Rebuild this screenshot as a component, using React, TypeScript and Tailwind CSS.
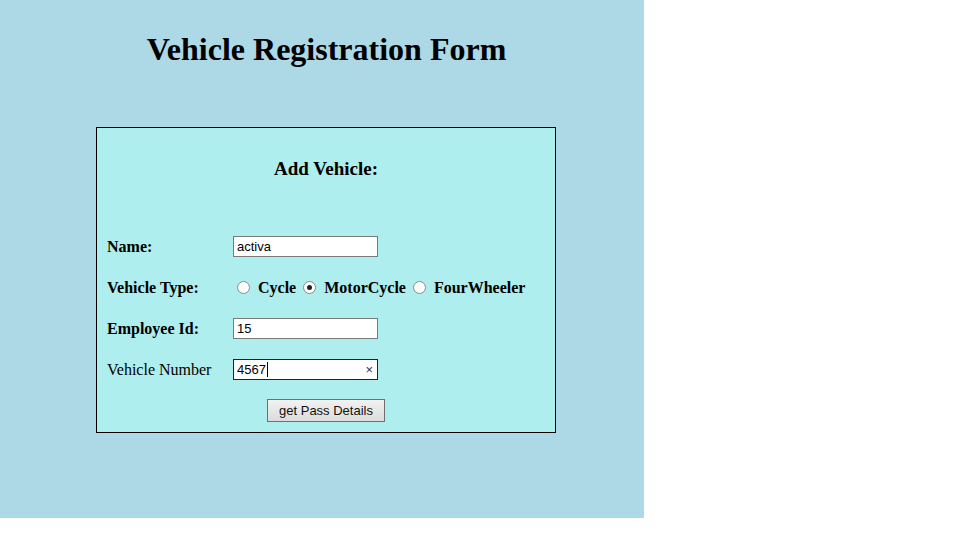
import React from 'react'

// Vehicle registration page: title on a light-blue panel, form in a bordered turquoise box

const serif = "font-['Liberation_Serif','Times_New_Roman',serif]"
const sans = "font-['Liberation_Sans',Arial,sans-serif]"

const Radio: React.FC<{ label: string; checked?: boolean }> = ({ label, checked = false }) => (
  <span className="flex items-center">
    <span className="flex h-[13px] w-[13px] items-center justify-center rounded-full border border-[#8a8a8a] bg-white">
      {checked && <span className="h-[5px] w-[5px] rounded-full bg-[#222]" />}
    </span>
    <span className="ml-[8px] font-bold">{label}</span>
  </span>
)

const TextBox: React.FC<{ value: string; focused?: boolean }> = ({ value, focused = false }) => (
  <div
    className={`flex h-[21px] w-[145px] items-center border bg-white pl-[3px] pr-[4px] text-[13px] text-black ${sans} ${
      focused ? 'border-[#222]' : 'border-[#7a7a7a]'
    }`}
  >
    <span className="leading-none">{value}</span>
    {focused && <span className="ml-[1px] h-[15px] w-px bg-black" />}
    {focused && <span className="ml-auto text-[13px] leading-none text-[#333]">×</span>}
  </div>
)

const Row: React.FC<{ label: string; bold?: boolean; children: React.ReactNode }> = ({ label, bold = true, children }) => (
  <div className="flex h-[41px] items-center">
    <div className={`w-[126px] ${bold ? 'font-bold' : ''}`}>{label}</div>
    {children}
  </div>
)

export default function App() {
  return (
    <div className={`h-[540px] w-[960px] bg-white text-black ${serif}`}>
      <div className="flex h-[518px] w-[644px] flex-col items-center bg-[#add8e6]">
        <h1 className="mt-[31px] pl-[9px] text-[32px] font-bold leading-[37px]">Vehicle Registration Form</h1>

        <div className="ml-[8px] mt-[59px] flex h-[306px] w-[460px] flex-col border border-black bg-[#afeeee] text-[16px]">
          <h3 className="mt-[30px] text-center text-[19px] font-bold leading-[22px]">Add Vehicle:</h3>

          <div className="mt-[46px] flex flex-col pl-[10px]">
            <Row label="Name:">
              <TextBox value="activa" />
            </Row>
            <Row label="Vehicle Type:">
              <div className="ml-[4px] flex items-center gap-[7px]">
                <Radio label="Cycle" />
                <Radio label="MotorCycle" checked />
                <Radio label="FourWheeler" />
              </div>
            </Row>
            <Row label="Employee Id:">
              <TextBox value="15" />
            </Row>
            <Row label="Vehicle Number" bold={false}>
              <TextBox value="4567" focused />
            </Row>
          </div>

          <div className="flex h-[41px] items-center justify-center">
            <button
              className={`h-[23px] w-[118px] border border-[#707070] bg-gradient-to-b from-[#f2f2f2] to-[#dcdcdc] text-[13px] text-[#111] ${sans}`}
            >
              get Pass Details
            </button>
          </div>
        </div>
      </div>
    </div>
  )
}
